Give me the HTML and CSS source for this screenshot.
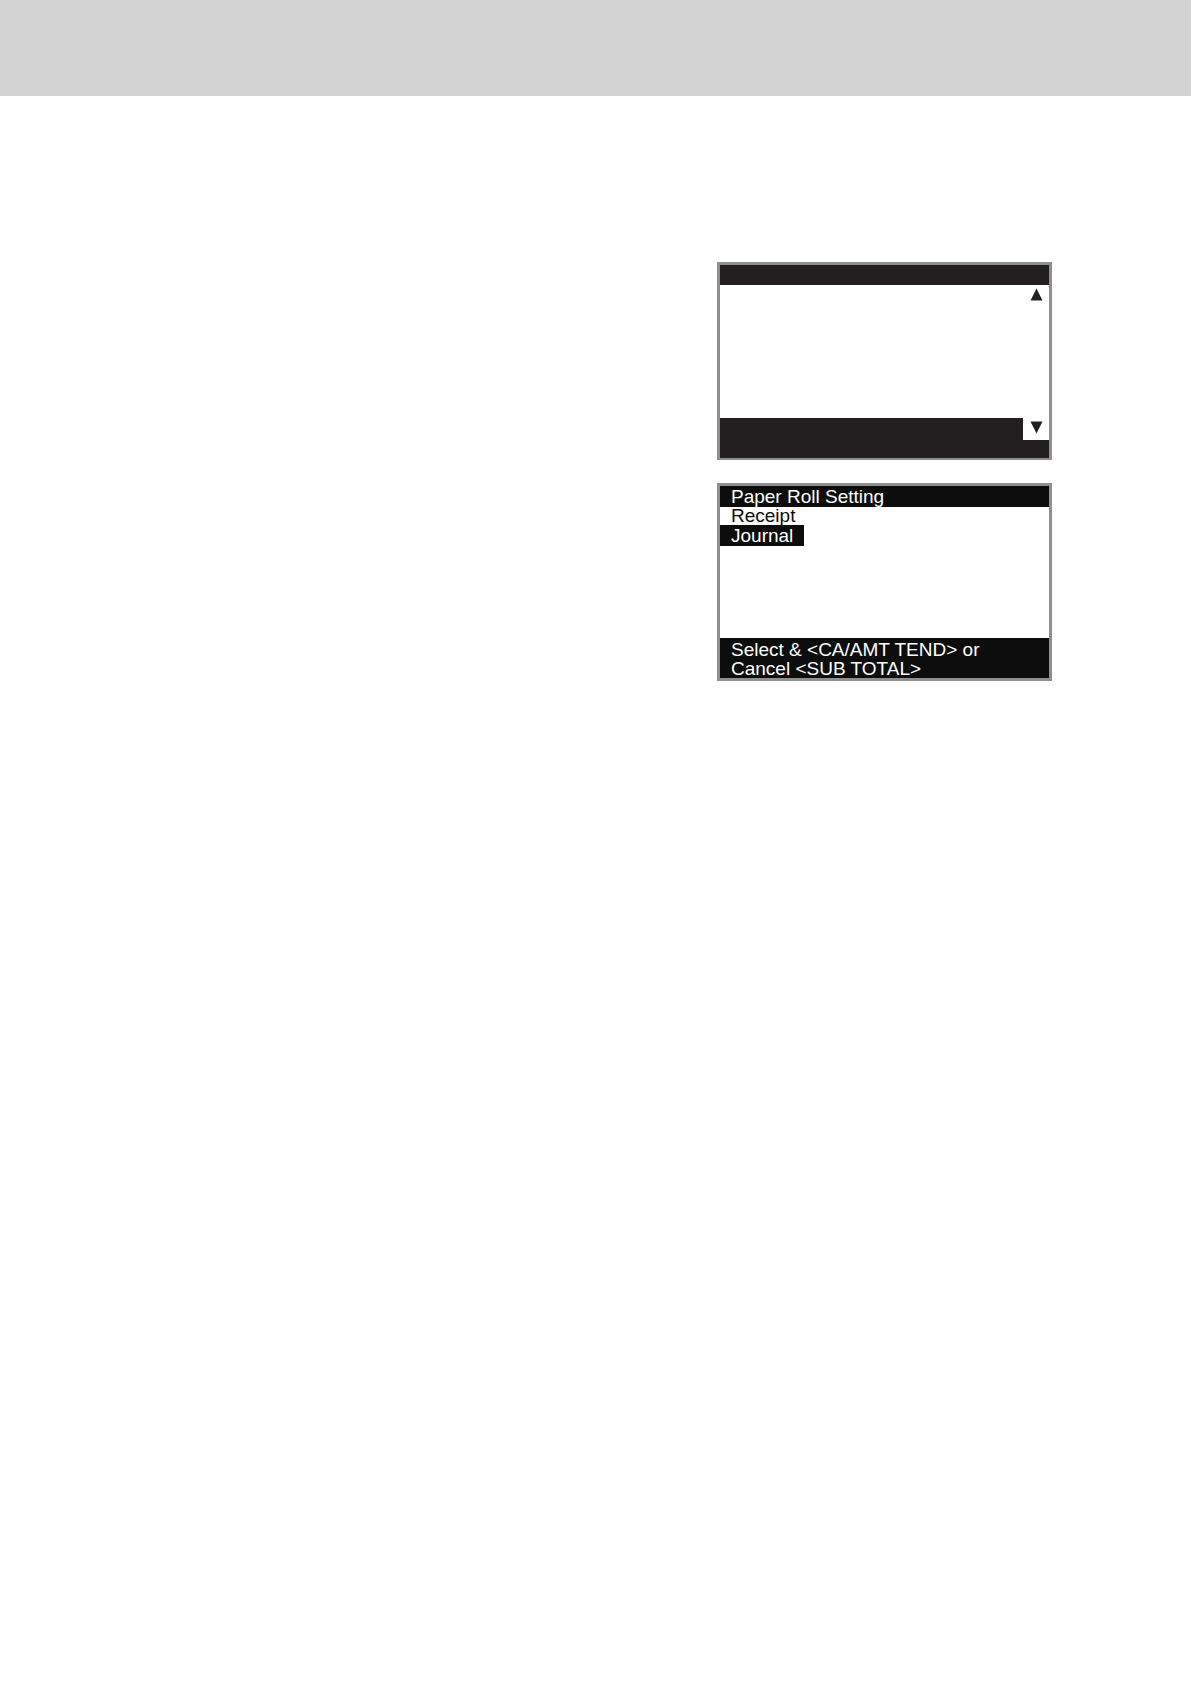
FILE: index.html
```html
<!DOCTYPE html>
<html lang="en">
<head>
<meta charset="utf-8">
<meta name="viewport" content="width=device-width, initial-scale=1">
<title>Paper Roll Setting</title>
<link rel="stylesheet" href="styles.css">
</head>
<body>
<header class="page-header"></header>
<main class="screens">
  <section class="screen screen-scroll">
    <div class="bar"></div>
    <div class="body">
      <button class="arrow" type="button" aria-label="Scroll up"><svg width="13" height="13" viewBox="0 0 13 13"><path d="M6.5 0.5L12.5 12.5H0.5Z"/></svg></button>
    </div>
    <div class="bar bar-foot">
      <button class="arrow arrow-down" type="button" aria-label="Scroll down"><svg width="13" height="13" viewBox="0 0 13 13"><path d="M0.5 0.5H12.5L6.5 12.5Z"/></svg></button>
    </div>
  </section>
  <section class="screen screen-menu">
    <h1 class="bar title">Paper Roll Setting</h1>
    <div class="body options">
      <button class="option" type="button">Receipt</button>
      <button class="option selected" type="button">Journal</button>
    </div>
    <p class="bar bar-foot hint">Select &amp; &lt;CA/AMT TEND&gt; or<br>Cancel &lt;SUB TOTAL&gt;</p>
  </section>
</main>
</body>
</html>
```
FILE: styles.css
```css
* {
  box-sizing: border-box;
}

body {
  margin: 0;
  background: #fff;
  color: #0d0d0d;
  font: 19px/19px "Liberation Sans", Arial, sans-serif;
}

.page-header {
  height: 96px;
  background: #d3d3d3;
}

.screens {
  display: flex;
  flex-direction: column;
  align-items: flex-end;
  gap: 23px;
  padding: 166px 139px 40px 16px;
}

.screen {
  display: flex;
  flex-direction: column;
  width: 100%;
  max-width: 335px;
  min-height: 198px;
  border: 3px solid #8f8f8f;
  --ink: #0d0d0d;
}

.screen-scroll {
  --ink: #231f20;
  border-bottom-width: 2px;
}

.bar {
  min-height: 20px;
  margin: 0;
  background: var(--ink);
}

.bar-foot {
  display: flex;
  justify-content: flex-end;
  align-items: flex-start;
  min-height: 40px;
}

.body {
  display: flex;
  flex: 1;
  justify-content: flex-end;
  align-items: flex-start;
}

.arrow {
  display: flex;
  justify-content: center;
  width: 26px;
  height: 22px;
  padding: 3px 0 0;
  border: 0;
  background: #fff;
  fill: var(--ink);
}

.title,
.hint,
.option {
  padding: 0 11px;
  font-size: 19px;
  font-weight: 400;
}

.title,
.hint {
  color: #fff;
}

.title {
  line-height: 21px;
}

.options {
  flex-direction: column;
  justify-content: flex-start;
}

.option {
  border: 0;
  background: none;
  color: #0d0d0d;
  font-family: inherit;
  line-height: 18px;
}

.selected {
  background: #0d0d0d;
  color: #fff;
  line-height: 21px;
}

.hint {
  display: block;
  padding-top: 2px;
}
```
